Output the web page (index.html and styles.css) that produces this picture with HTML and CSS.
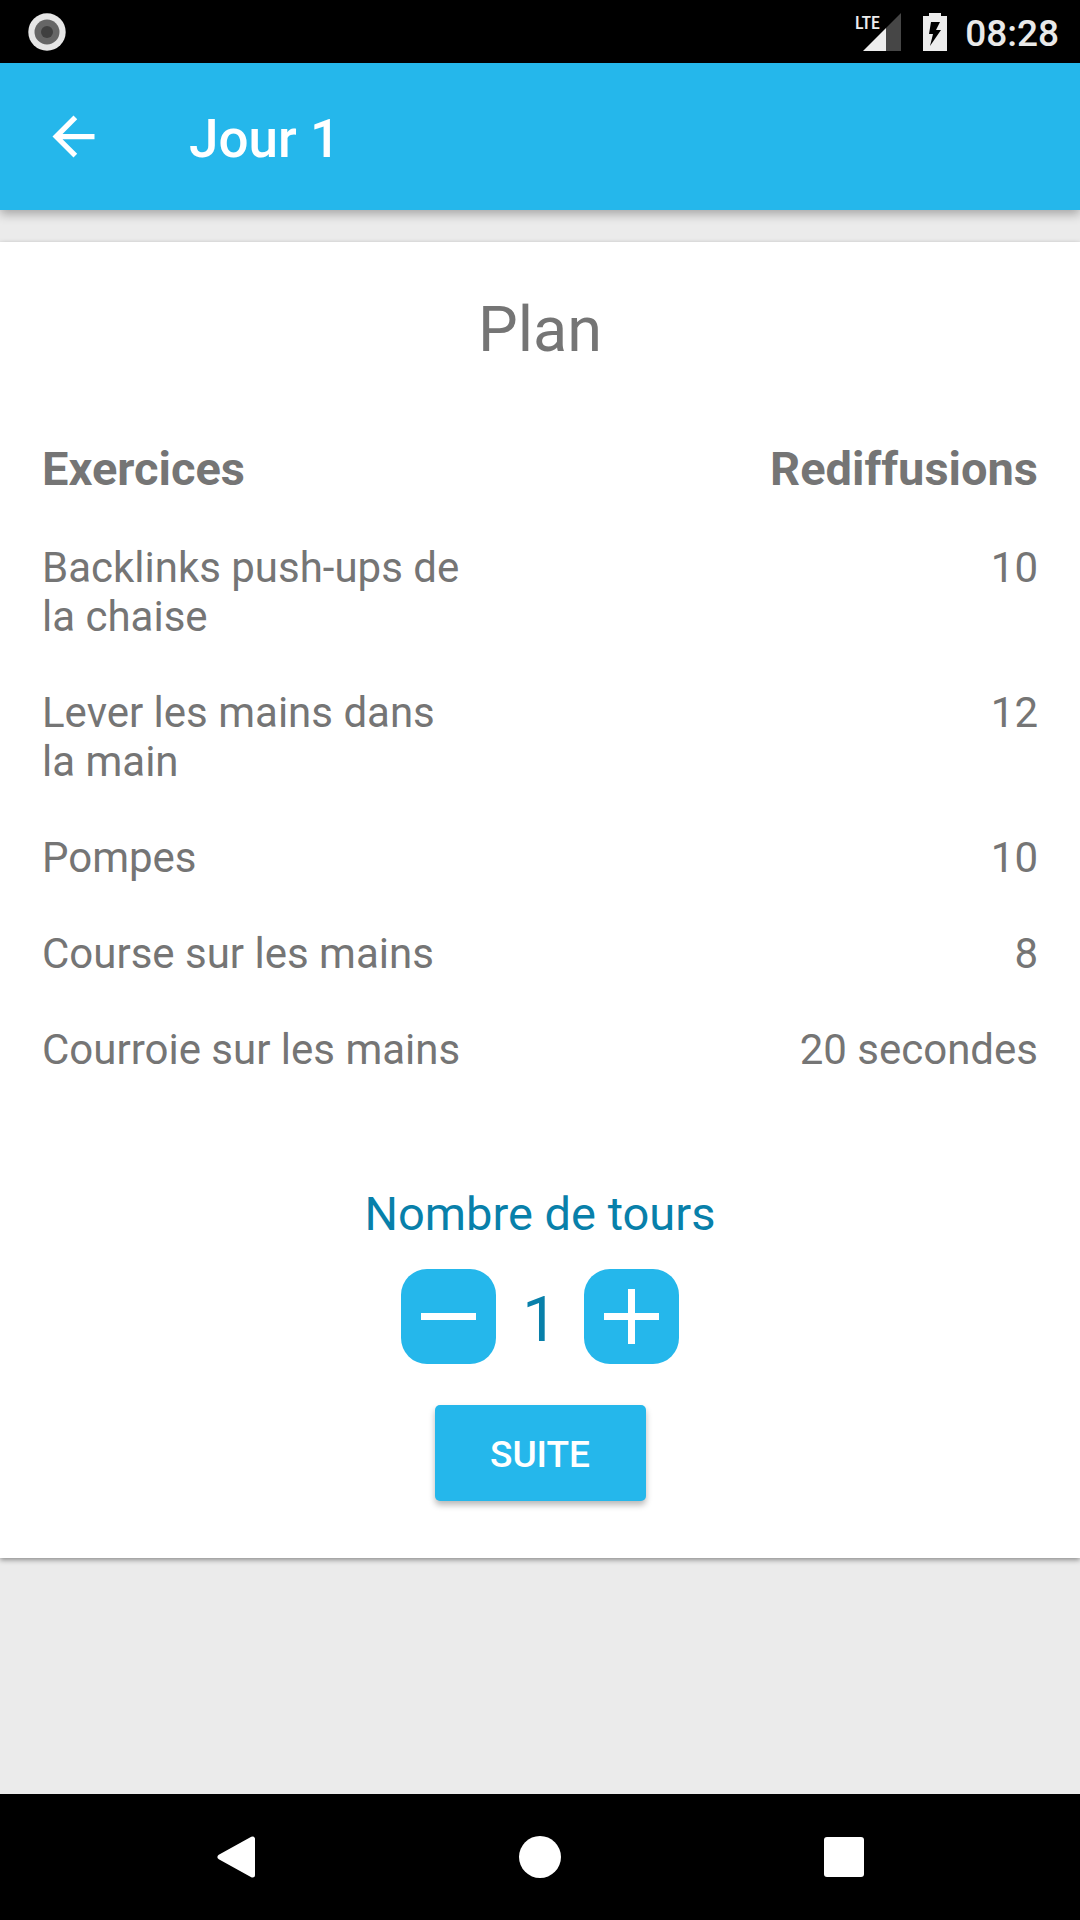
FILE: index.html
```html
<!DOCTYPE html>
<html lang="fr">
<head>
<meta charset="utf-8">
<meta name="viewport" content="width=device-width, initial-scale=1">
<title>Jour 1</title>
<link rel="stylesheet" href="styles.css">
</head>
<body>
<div class="status-bar">
  <svg class="status-camera" viewBox="0 0 38 38" aria-hidden="true">
    <circle cx="19" cy="19" r="18.7" fill="#e6e6e6"/>
    <circle cx="19" cy="19" r="12.5" fill="#666"/>
    <circle cx="19" cy="19" r="6" fill="#404040"/>
  </svg>
  <div class="status-icons">
    <svg class="status-signal" viewBox="0 0 46 38" aria-hidden="true">
      <path d="M46 0V38H31V15z" fill="#464646"/>
      <path d="M31 15V38H8z" fill="#ededed"/>
      <text class="network-type" x="0" y="16">LTE</text>
    </svg>
    <svg class="status-battery" viewBox="0 0 24 38" aria-hidden="true">
      <path fill="#ededed" fill-rule="evenodd" d="M6 0h12v3h6v35H0V3h6zM8 9L6 21h4L7 33 18 17h-5l4-8z"/>
    </svg>
    <time class="clock">08:28</time>
  </div>
</div>

<header class="app-bar">
  <button class="back-button" type="button" aria-label="Retour">
    <svg viewBox="0 0 24 24" aria-hidden="true"><path fill="#fff" d="M20 11H7.83l5.59-5.59L12 4l-8 8 8 8 1.41-1.41L7.83 13H20z"/></svg>
  </button>
  <h1 class="app-title">Jour 1</h1>
</header>

<main class="content">
  <section class="card">
    <h2 class="card-title">Plan</h2>
    <table class="plan">
      <thead>
        <tr><th scope="col">Exercices</th><th scope="col">Rediffusions</th></tr>
      </thead>
      <tbody>
        <tr><td>Backlinks push-ups de la chaise</td><td>10</td></tr>
        <tr><td>Lever les mains dans la main</td><td>12</td></tr>
        <tr><td>Pompes</td><td>10</td></tr>
        <tr><td>Course sur les mains</td><td>8</td></tr>
        <tr><td>Courroie sur les mains</td><td>20 secondes</td></tr>
      </tbody>
    </table>
    <div class="rounds-label" id="rounds-label">Nombre de tours</div>
    <div class="rounds" role="group" aria-labelledby="rounds-label">
      <button class="step-button" type="button" aria-label="Moins">
        <svg viewBox="0 0 95 95" aria-hidden="true"><path d="M20 47.5H75" stroke="#fff" stroke-width="7"/></svg>
      </button>
      <output class="rounds-value">1</output>
      <button class="step-button" type="button" aria-label="Plus">
        <svg viewBox="0 0 95 95" aria-hidden="true"><path d="M20 47.5H75M47.5 20V75" stroke="#fff" stroke-width="7"/></svg>
      </button>
    </div>
    <button class="next-button" type="button">SUITE</button>
  </section>
</main>

<nav class="nav-bar" aria-label="Navigation système">
  <button class="nav-button" type="button" aria-label="Précédent">
    <svg viewBox="0 0 42 42" aria-hidden="true"><path d="M37.500 3V39L5 21z" fill="#fff" stroke="#fff" stroke-width="5" stroke-linejoin="round"/></svg>
  </button>
  <button class="nav-button" type="button" aria-label="Accueil">
    <svg viewBox="0 0 42 42" aria-hidden="true"><circle cx="21" cy="21" r="21" fill="#fff"/></svg>
  </button>
  <button class="nav-button" type="button" aria-label="Applications récentes">
    <svg viewBox="0 0 42 42" aria-hidden="true"><rect x="1" y="1" width="40" height="40" rx="3" fill="#fff"/></svg>
  </button>
</nav>
</body>
</html>
```

FILE: styles.css
```css
:root {
  --accent: #25b7eb;
  --accent-dark: #0880aa;
  --text: #757575;
}

* {
  box-sizing: border-box;
}

body {
  margin: 0;
  min-height: 100vh;
  display: flex;
  flex-direction: column;
  background: #ebebeb;
  color: var(--text);
  font-family: Roboto, "Noto Sans", sans-serif;
  font-size: 42px;
  line-height: 49px;
}

button {
  margin: 0;
  padding: 0;
  border: 0;
  background: none;
  color: inherit;
  font: inherit;
  cursor: pointer;
}

svg {
  display: block;
}

/* System status bar */
.status-bar {
  display: flex;
  align-items: center;
  justify-content: space-between;
  height: 63px;
  padding: 0 21px 0 28px;
  background: #000;
}

.status-camera {
  width: 38px;
  height: 38px;
}

.status-icons {
  display: flex;
  align-items: center;
}

.status-signal {
  width: 46px;
  height: 38px;
  margin-right: 22px;
}

.status-battery {
  width: 24px;
  height: 38px;
  margin-right: 18px;
}

.network-type {
  fill: #ededed;
  font-family: "Roboto Condensed", "Liberation Sans Narrow", Roboto, sans-serif;
  font-size: 18px;
  font-weight: 500;
}

.clock {
  padding-top: 4px;
  color: #e9e9e9;
  font-size: 37px;
  line-height: 44px;
  font-weight: 500;
}

/* App bar */
.app-bar {
  position: relative;
  z-index: 1;
  display: flex;
  align-items: center;
  gap: 84px;
  height: 147px;
  padding: 0 42px;
  background: var(--accent);
  color: #fff;
  box-shadow: 0 4px 10px rgba(0, 0, 0, 0.3);
}

.back-button svg {
  width: 63px;
  height: 63px;
}

.app-title {
  margin: 0;
  padding-top: 5px;
  font-size: 53px;
  line-height: 62px;
  font-weight: 500;
}

/* Plan card */
.content {
  flex: 1;
  padding: 32px 0;
}

.card {
  display: flex;
  flex-direction: column;
  align-items: center;
  padding: 51px 42px 57px;
  background: #fff;
  box-shadow: 0 2px 5px rgba(0, 0, 0, 0.4);
}

.card-title {
  margin: 0 0 50px;
  font-size: 63px;
  line-height: 74px;
  font-weight: 400;
}

.plan {
  width: 100%;
  table-layout: fixed;
  border-collapse: collapse;
}

.plan th,
.plan td {
  padding: 24px 0 23px;
  text-align: right;
  vertical-align: top;
}

.plan th:first-child,
.plan td:first-child {
  padding-right: 76px;
  text-align: left;
}

.plan th {
  font-size: 47px;
  line-height: 55px;
  font-weight: 700;
}

.rounds-label {
  margin: 89px 0 28px;
  color: var(--accent-dark);
  font-size: 47px;
  line-height: 55px;
}

.rounds {
  display: flex;
  align-items: center;
  gap: 26px;
}

.step-button {
  width: 95px;
  height: 95px;
  border-radius: 26px;
  background: var(--accent);
}

.rounds-value {
  padding-top: 7px;
  color: var(--accent-dark);
  font-size: 63px;
  line-height: 74px;
}

.next-button {
  min-width: 211px;
  height: 96px;
  margin-top: 41px;
  padding: 2px 42px 0;
  border-radius: 5px;
  background: var(--accent);
  color: #fff;
  font-size: 37px;
  font-weight: 500;
  box-shadow: 0 4px 6px rgba(0, 0, 0, 0.28);
}

/* System navigation bar */
.nav-bar {
  display: flex;
  height: 126px;
  padding: 0 84px;
  background: #000;
}

.nav-button {
  display: flex;
  flex: 1;
  align-items: center;
  justify-content: center;
}

.nav-button svg {
  width: 42px;
  height: 42px;
}
```
